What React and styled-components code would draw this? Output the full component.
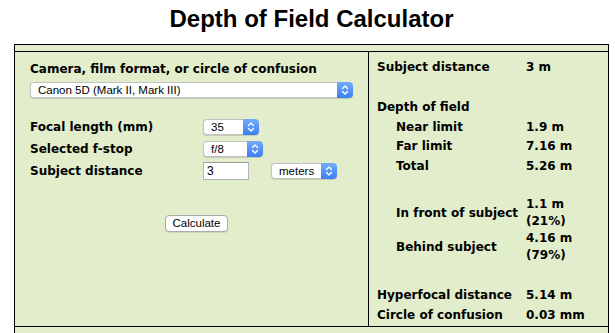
import React from "react";
import styled, { createGlobalStyle } from "styled-components";

const GlobalStyle = createGlobalStyle`
  html, body { margin: 0; padding: 0; background: #fff; }
  body { font-family: "DejaVu Sans", Verdana, sans-serif; color: #000; }
`;

const Page = styled.div`
  width: 595px;
  margin-left: 14px;
`;

const Title = styled.h1`
  margin: 5px 0 11px;
  font: bold 24px/28px "Liberation Sans", Arial, sans-serif;
  text-align: center;
  color: #000;
`;

const Table = styled.div`
  border: 1px solid #000;
  background: #e1edcb;
`;

const TopStrip = styled.div`
  height: 6px;
  border-bottom: 1px solid #000;
`;

const MainRow = styled.div`
  display: flex;
  border-bottom: 1px solid #000;
`;

const BottomStrip = styled.div`
  height: 30px;
`;

const LeftCell = styled.div`
  width: 354px;
  box-sizing: border-box;
  border-right: 1px solid #000;
  padding: 10px 15px 0;
`;

const RightCell = styled.div`
  flex: 1;
  padding: 5px 0 1px 8px;
`;

const FieldLabel = styled.div`
  font: bold 12px/15px "DejaVu Sans", Verdana, sans-serif;
  margin-bottom: 5px;
`;

const SelectBox = styled.div`
  display: flex;
  width: ${(p) => p.$w}px;
  height: 16px;
  border-radius: 4px;
  box-shadow: 0 1px 1px rgba(0, 0, 0, 0.14);
  font: 11.5px/14px "Liberation Sans", Arial, sans-serif;
`;

const SelectText = styled.div`
  flex: 1;
  display: flex;
  align-items: center;
  padding-left: 7px;
  background: #fff;
  border: 1px solid #c2c2c2;
  border-right: none;
  border-radius: 4px 0 0 4px;
  white-space: nowrap;
  overflow: hidden;
`;

const ArrowBox = styled.div`
  width: 16px;
  display: flex;
  align-items: center;
  justify-content: center;
  border-radius: 0 4px 4px 0;
  background: linear-gradient(#74acfa, #3a7ef2);
`;

const FormGrid = styled.div`
  display: grid;
  grid-template-columns: 173px 1fr;
  grid-auto-rows: 22px;
  align-items: center;
  margin-top: 18px;
`;

const RowLabel = styled.div`
  font: bold 12px/15px "DejaVu Sans", Verdana, sans-serif;
`;

const Controls = styled.div`
  display: flex;
  align-items: center;
  gap: 22px;
`;

const TextInput = styled.input`
  width: 46px;
  height: 18px;
  box-sizing: border-box;
  border: 1px solid #b4b4b4;
  border-top-color: #9a9a9a;
  padding: 0 3px;
  margin: 0;
  background: #fff;
  font: 12px "Liberation Sans", Arial, sans-serif;
  color: #000;
  outline: none;
`;

const ButtonRow = styled.div`
  display: flex;
  justify-content: center;
  padding-left: 10px;
  margin-top: 33px;
`;

const Button = styled.button`
  height: 17px;
  padding: 0 7px;
  margin: 0;
  background: #fff;
  border: 1px solid #ababab;
  border-radius: 4px;
  box-shadow: 0 1px 1px rgba(0, 0, 0, 0.1);
  font: 11.5px/15px "Liberation Sans", Arial, sans-serif;
  color: #000;
`;

const ResultRow = styled.div`
  display: grid;
  grid-template-columns: 149px 1fr;
  align-items: center;
  height: ${(p) => p.$h}px;
  font: bold 12px/17px "DejaVu Sans", Verdana, sans-serif;
`;

const ResultLabel = styled.span`
  padding-left: ${(p) => (p.$indent ? 19 : 0)}px;
`;

const ResultValue = styled.span``;

const Spacer = styled.div`
  height: ${(p) => p.$h}px;
`;

function Chevrons() {
  return (
    <svg width="10" height="12" viewBox="0 0 10 12" fill="none" stroke="#fff" strokeWidth="1.4" strokeLinecap="round" strokeLinejoin="round">
      <path d="M2.5 4.5 L5 2 L7.5 4.5" />
      <path d="M2.5 7.5 L5 10 L7.5 7.5" />
    </svg>
  );
}

function Select({ w, children }) {
  return (
    <SelectBox $w={w}>
      <SelectText>{children}</SelectText>
      <ArrowBox>
        <Chevrons />
      </ArrowBox>
    </SelectBox>
  );
}

function Result({ label, value, indent, h = 19.5 }) {
  return (
    <ResultRow $h={h}>
      <ResultLabel $indent={indent}>{label}</ResultLabel>
      <ResultValue>{value}</ResultValue>
    </ResultRow>
  );
}

export default function App() {
  return (
    <>
      <GlobalStyle />
      <Page>
        <Title>Depth of Field Calculator</Title>
        <Table>
          <TopStrip />
          <MainRow>
            <LeftCell>
              <FieldLabel>Camera, film format, or circle of confusion</FieldLabel>
              <Select w={323}>Canon 5D (Mark II, Mark III)</Select>
              <FormGrid>
                <RowLabel>Focal length (mm)</RowLabel>
                <Controls>
                  <Select w={56}>35</Select>
                </Controls>
                <RowLabel>Selected f-stop</RowLabel>
                <Controls>
                  <Select w={60}>f/8</Select>
                </Controls>
                <RowLabel>Subject distance</RowLabel>
                <Controls>
                  <TextInput defaultValue="3" readOnly />
                  <Select w={66}>meters</Select>
                </Controls>
              </FormGrid>
              <ButtonRow>
                <Button type="button">Calculate</Button>
              </ButtonRow>
            </LeftCell>
            <RightCell>
              <Result label="Subject distance" value="3 m" h={20} />
              <Spacer $h={21} />
              <Result label="Depth of field" value="" />
              <Result label="Near limit" value="1.9 m" indent />
              <Result label="Far limit" value="7.16 m" indent />
              <Result label="Total" value="5.26 m" indent />
              <Spacer $h={20} />
              <Result
                label="In front of subject"
                value={<>1.1 m<br />(21%)</>}
                indent
                h={34}
              />
              <Result
                label="Behind subject"
                value={<>4.16 m<br />(79%)</>}
                indent
                h={34}
              />
              <Spacer $h={22} />
              <Result label="Hyperfocal distance" value="5.14 m" />
              <Result label="Circle of confusion" value="0.03 mm" />
            </RightCell>
          </MainRow>
          <BottomStrip />
        </Table>
      </Page>
    </>
  );
}
